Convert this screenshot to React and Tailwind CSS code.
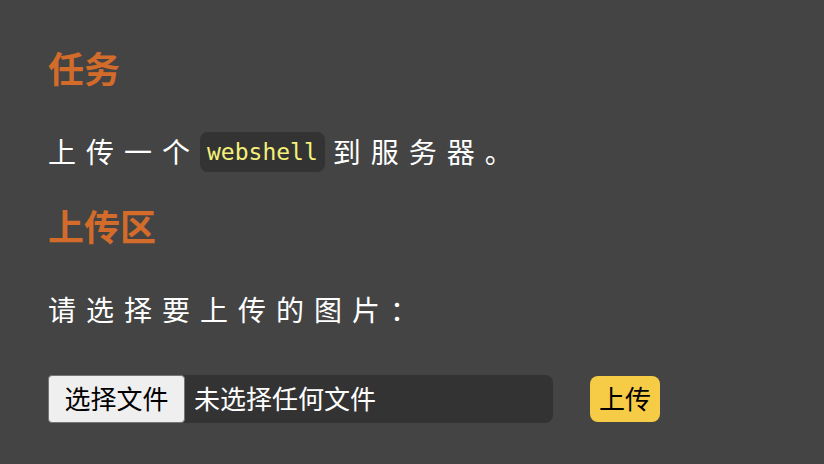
export default function App() {
  return (
    <div
      className="w-[824px] h-[464px] bg-[#444444] text-white px-12 pt-[50px] overflow-hidden"
      style={{ fontFamily: '"Noto Sans", "Noto Sans CJK SC", sans-serif' }}
    >
      {/* Task */}
      <h2 className="text-[36px] leading-[40px] font-bold text-[#d36b2a]">任务</h2>
      <p className="mt-[42px] h-[40px] flex items-center text-[28px] tracking-[10px]">
        <span>上传一个</span>
        <code
          className="mr-[8px] px-[7px] h-[40px] flex items-center rounded-lg bg-[#333333] text-[#f5f07a] text-[23px] tracking-normal"
          style={{ fontFamily: '"DejaVu Sans Mono", monospace' }}
        >
          webshell
        </code>
        <span>到服务器。</span>
      </p>

      {/* Upload area */}
      <h2 className="mt-[36px] text-[36px] leading-[40px] font-bold text-[#d36b2a]">上传区</h2>
      <p className="mt-[42px] text-[28px] leading-[40px] tracking-[10px]">请选择要上传的图片：</p>

      <div className="mt-[45px] flex items-center">
        <div className="w-[505px] h-[48px] flex items-center rounded-lg bg-[#333333]">
          <button className="h-[48px] w-[137px] flex items-center justify-center bg-[#efefef] border border-[#767676] rounded-[4px] text-black text-[26px]">
            选择文件
          </button>
          <span className="ml-[9px] text-[26px]">未选择任何文件</span>
        </div>
        <button className="ml-[37px] w-[70px] h-[46px] flex items-center justify-center rounded-lg bg-[#f6cb45] text-black text-[26px]">
          上传
        </button>
      </div>
    </div>
  );
}
